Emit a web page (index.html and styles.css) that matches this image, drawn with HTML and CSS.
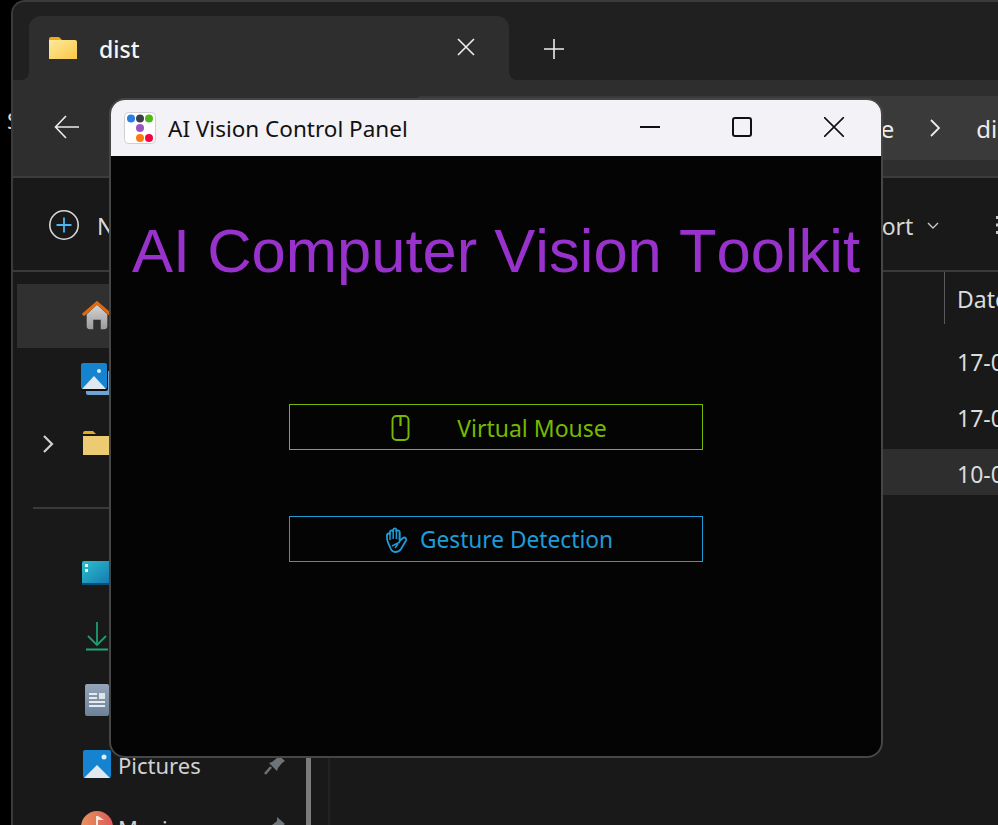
FILE: index.html
```html
<!DOCTYPE html>
<html lang="en">
<head>
<meta charset="utf-8">
<title>AI Vision Control Panel</title>
<link rel="stylesheet" href="styles.css">
</head>
<body>
<div class="desktop">
  <span class="desktop-label">S</span>

  <div class="explorer">
    <div class="tabbar">
      <div class="strip-left"></div>
      <div class="tab-wrap">
        <div class="tab">
          <svg class="tab-folder" viewBox="0 0 28 22"><defs><linearGradient id="tf" x1="0" y1="0" x2="1" y2="1"><stop offset="0" stop-color="#fde9a0"/><stop offset="1" stop-color="#fbc843"/></linearGradient></defs><path d="M0 2a2 2 0 0 1 2-2h8l3 3H0z" fill="#f4a90f"/><path d="M0 3h26a2 2 0 0 1 2 2v17H0z" fill="url(#tf)"/></svg>
          <span class="tab-name">dist</span>
          <svg class="tab-close" viewBox="0 0 18 18"><path d="M1 1l16 16M17 1L1 17" stroke="#f0f0f0" stroke-width="1.6" fill="none"/></svg>
        </div>
      </div>
      <div class="strip-right">
        <svg class="tab-add" viewBox="0 0 20 20"><path d="M10 0v20M0 10h20" stroke="#ececec" stroke-width="1.6" fill="none"/></svg>
      </div>
    </div>

    <div class="navbar">
      <div class="nav-main">
        <svg class="nav-back" viewBox="0 0 26 24"><path d="M25 12H2M12 1L1.500 12 12 23" stroke="#ececec" stroke-width="1.600" fill="none"/></svg>
        <div class="address">
          <span class="crumb">Home</span>
          <svg class="crumb-sep" viewBox="0 0 12 20"><path d="M2 2l8 8-8 8" stroke="#ececec" stroke-width="1.800" fill="none"/></svg>
          <span class="crumb">dist</span>
        </div>
      </div>
    </div>

    <div class="cmdbar">
      <svg class="cmd-new" viewBox="0 0 32 32"><circle cx="16" cy="16" r="14.200" stroke="#d8d8d8" stroke-width="1.600" fill="none"/><path d="M16 8.500v15M8.500 16h15" stroke="#4db5f0" stroke-width="1.800" fill="none"/></svg>
      <span class="cmd-text">New</span>
      <span class="cmd-text cmd-sort">Sort</span>
      <svg class="cmd-caret" viewBox="0 0 12 7"><path d="M1 1l5 5 5-5" stroke="#c8c8c8" stroke-width="1.400" fill="none"/></svg>
      <svg class="cmd-more" viewBox="0 0 3 18"><path d="M0 0h3v3H0zM0 7.500h3v3H0zM0 15h3v3H0z" fill="#c8c8c8"/></svg>
    </div>

    <div class="main">
      <nav class="sidebar">
        <div class="side-row side-row-active">
          <span class="side-icon">
            <svg class="ico-home" viewBox="0 0 32 32"><defs><linearGradient id="hm" x1="0" y1="0" x2="0" y2="1"><stop offset="0" stop-color="#d4d4d4"/><stop offset="1" stop-color="#9c9c9c"/></linearGradient></defs><path d="M5 14L16 4l11 10v13a3 3 0 0 1-3 3h-4V20h-8v10H8a3 3 0 0 1-3-3z" fill="url(#hm)"/><path d="M1 15L16 2l15 13" stroke="#dd6a10" stroke-width="3.400" fill="none"/></svg>
          </span>
        </div>
        <div class="side-row">
          <span class="side-icon">
            <svg class="ico-gallery" viewBox="0 0 32 32"><rect x="5" y="8" width="27" height="24" rx="2" fill="#6ea3d4"/><rect x="0" y="0" width="27" height="28" rx="2" fill="#111"/><rect y="0" width="26" height="26" rx="2" fill="#1583cf"/><circle cx="18" cy="8" r="2" fill="#dcecf8"/><path d="M1 26l12-13 12 13z" fill="#dfe8f0"/></svg>
          </span>
        </div>
        <div class="side-row">
          <svg class="side-chevron" viewBox="0 0 12 20"><path d="M2 2l8 8-8 8" stroke="#d0d0d0" stroke-width="2.200" fill="none"/></svg>
          <span class="side-icon">
            <svg class="ico-folder" viewBox="0 0 28 24"><path d="M0 2a2 2 0 0 1 2-2h8l3 3H0z" fill="#e3a81c"/><path d="M0 5h28v19H0z" fill="#eccb72"/></svg>
          </span>
        </div>
        <div class="side-sep"><span class="side-sep-line"></span></div>
        <div class="side-row">
          <span class="side-icon">
            <svg class="ico-desktop" viewBox="0 0 30 24"><defs><linearGradient id="dk" x1="0" y1="0" x2="1" y2="1"><stop offset="0" stop-color="#2cc0cc"/><stop offset="1" stop-color="#1274b0"/></linearGradient></defs><rect width="30" height="24" rx="2" fill="url(#dk)"/><rect y="22" width="30" height="2" fill="#0f4d73"/><path d="M3 3h3v3H3zM3 8h3v3H3z" fill="#e8f2f6"/></svg>
          </span>
        </div>
        <div class="side-row">
          <span class="side-icon">
            <svg class="ico-download" viewBox="0 0 22 29"><path d="M11 0v23M2 14l9 9 9-9" stroke="#1f9c76" stroke-width="1.800" fill="none"/><path d="M0 27.500h22" stroke="#1fa67c" stroke-width="2" fill="none"/></svg>
          </span>
        </div>
        <div class="side-row">
          <span class="side-icon">
            <svg class="ico-doc" viewBox="0 0 24 32"><defs><linearGradient id="dc" x1="0" y1="0" x2="0" y2="1"><stop offset="0" stop-color="#94a5b8"/><stop offset="1" stop-color="#6d8199"/></linearGradient></defs><rect width="24" height="32" rx="2" fill="url(#dc)"/><path d="M4 9h8v2H4zM4 13h8v2H4zM4 17h16v2H4zM4 21h16v2H4z" fill="#e6eaee"/><rect x="14" y="9" width="6" height="6" fill="#dfe4e9"/></svg>
          </span>
        </div>
        <div class="side-row">
          <span class="side-icon">
            <svg class="ico-pictures" viewBox="0 0 28 28"><rect width="28" height="28" rx="2" fill="#1583cf"/><circle cx="21" cy="7" r="2.500" fill="#dcecf8"/><path d="M1 28l13-13 13 13z" fill="#dfe8f0"/></svg>
          </span>
          <span class="side-label">Pictures</span>
          <svg class="ico-pin" viewBox="0 0 22 22"><path d="M13 1l8 7-3 2-4 5-1 3-8-8 3-1 5-4z" fill="#6f7478"/><path d="M7 14l-6 7" stroke="#6f7478" stroke-width="2.500" fill="none"/></svg>
        </div>
        <div class="side-row">
          <span class="side-icon">
            <svg class="ico-music" viewBox="0 0 32 32"><defs><linearGradient id="m" x1="0" y1="0" x2="1" y2="0"><stop offset="0" stop-color="#e9925c"/><stop offset="1" stop-color="#d95b5b"/></linearGradient></defs><circle cx="16" cy="16" r="16" fill="url(#m)"/><path d="M15 5h2l6 4-6 0v12h-2z" fill="#f6e6e0"/></svg>
          </span>
          <span class="side-label">Music</span>
          <svg class="ico-pin" viewBox="0 0 22 22"><path d="M13 1l8 7-3 2-4 5-1 3-8-8 3-1 5-4z" fill="#6f7478"/><path d="M7 14l-6 7" stroke="#6f7478" stroke-width="2.500" fill="none"/></svg>
        </div>
      </nav>
      <div class="scrollbar"></div>
      <section class="files">
        <header class="files-head"><span class="head-date">Date modified</span></header>
        <div class="file-row">17-03-2024</div>
        <div class="file-row">17-03-2024</div>
        <div class="file-row file-row-active">10-03-2024</div>
      </section>
    </div>
  </div>

  <div class="app">
    <div class="titlebar">
      <svg class="logo" viewBox="0 0 32 32">
        <rect x="0.500" y="0.500" width="31" height="31" rx="4" fill="#fff" stroke="#cfcfcf"/>
        <circle cx="7" cy="6.500" r="4" fill="#2a7de1"/><circle cx="16" cy="6.500" r="4" fill="#3c3f45"/><circle cx="25" cy="6.500" r="4" fill="#4cb81a"/>
        <circle cx="16" cy="16" r="4" fill="#9a55c0"/>
        <circle cx="16" cy="26" r="4" fill="#ff7a10"/><circle cx="25" cy="26" r="4" fill="#f5053f"/>
      </svg>
      <span class="app-name">AI Vision Control Panel</span>
      <div class="controls">
        <span class="control"><svg class="ctl-icon" viewBox="0 0 20 20"><path d="M0 10h20" stroke="#111" stroke-width="2" fill="none"/></svg></span>
        <span class="control"><svg class="ctl-icon" viewBox="0 0 20 20"><rect x="1" y="1" width="18" height="18" rx="2" stroke="#111" stroke-width="2" fill="none"/></svg></span>
        <span class="control"><svg class="ctl-icon" viewBox="0 0 20 20"><path d="M0 0l20 20M20 0L0 20" stroke="#111" stroke-width="1.600" fill="none"/></svg></span>
      </div>
    </div>
    <div class="panel">
      <h1 class="panel-title">AI Computer Vision Toolkit</h1>
      <button class="action action-green">
        <svg class="ico-mouse" viewBox="0 0 18 26"><rect x="1" y="1" width="16" height="24" rx="4" stroke="#76b900" stroke-width="1.900" fill="none"/><path d="M9 2v9" stroke="#76b900" stroke-width="2.200" fill="none"/></svg>
        <span>Virtual Mouse</span>
      </button>
      <button class="action action-blue">
        <svg class="ico-hand" viewBox="0 0 24 26"><path d="M5 20C3.500 17 2 14 2 11V8a1.500 1.500 0 0 1 3 0V5a1.600 1.600 0 0 1 3.200 0V3a1.600 1.600 0 0 1 3.200 0v2a1.600 1.600 0 0 1 3.200 0v9l3.400-3a2 2 0 0 1 3 2.500L16 22c-1.500 2.500-4 3-6 3-2.500 0-4-2-5-5z" stroke="#1f9bd8" stroke-width="1.800" fill="none"/><path d="M5 8v5M8.200 4v8M11.400 3v9M14.600 5v8M7 19l8-4M10 21l3-4" stroke="#1f9bd8" stroke-width="1.500" fill="none"/></svg>
        <span>Gesture Detection</span>
      </button>
    </div>
  </div>
</div>
</body>
</html>
```

FILE: styles.css
```css
* { box-sizing: border-box; }
html, body { margin: 0; height: 100%; background: #000; }
body { overflow: hidden; font-family: "Noto Sans", "Open Sans", sans-serif; }
svg { display: block; flex: none; }

.desktop { position: relative; width: 998px; height: 825px; overflow: hidden; background: #000; }
.desktop-label { position: absolute; left: 7px; top: 105px; font-size: 22px; color: #d8d8d8; }

/* Explorer window behind the app */
.explorer {
  position: absolute; left: 11px; top: 0; width: 1000px; height: 860px;
  display: flex; flex-direction: column;
  border: 2px solid #3b3b3b; border-right: 0; border-bottom: 0;
  border-top-left-radius: 14px; overflow: hidden;
  background: #191919;
}

.tabbar { display: flex; height: 78px; background: #2e2e2e; flex: none; }
.strip-left { width: 16px; background: #202020; border-bottom-right-radius: 8px; }
.tab-wrap { width: 480px; background: #202020; padding-top: 14px; }
.tab {
  height: 64px; background: #2e2e2e; border-radius: 12px 12px 0 0;
  display: flex; align-items: center; padding: 0 34px 0 20px;
}
.tab-folder { width: 28px; height: 22px; }
.tab-name { margin-left: 22px; font-size: 23px; font-weight: 500; color: #f5f5f5; line-height: 1; margin-top: 2px; }
.tab-close { width: 18px; height: 18px; margin-left: auto; margin-bottom: 2px; }
.strip-right { flex: 1; background: #202020; border-bottom-left-radius: 8px; padding: 37px 0 0 35px; }
.tab-add { width: 20px; height: 20px; }

.navbar { height: 98px; flex: none; background: #2e2e2e; border-bottom: 2px solid #3c3c3c; }
.nav-main { display: flex; align-items: flex-start; padding: 16px 0 0 0; }
.nav-back { width: 26px; height: 24px; margin: 19px 0 0 41px; }
.address {
  margin-left: 334px; flex: 1; height: 64px; background: #3a3a3a;
  border-radius: 8px 0 0 0; display: flex; align-items: center;
  padding-left: 412px; overflow: hidden; white-space: nowrap;
  font-size: 24px; color: #ececec;
}
.crumb-sep { width: 12px; height: 20px; margin: 0 35px 0 35px; }

.cmdbar {
  height: 94px; flex: none; border-bottom: 2px solid #3a3a3a;
  background: #191919; display: flex; align-items: center; padding: 2px 0 0 35px;
  font-size: 23px; color: #d8d8d8;
}
.cmd-new { width: 32px; height: 32px; }
.cmd-text { margin-left: 17px; padding-top: 2px; }
.cmd-sort { margin-left: 724px; }
.cmd-caret { width: 12px; height: 7px; margin-left: 14px; }
.cmd-more { width: 3px; height: 18px; margin-left: 57px; }

.main { display: flex; flex: 1; min-height: 0; }
.sidebar { width: 293px; flex: none; padding: 12px 0 0 4px; font-size: 22px; color: #cfd3d6; }
.side-row { height: 63.5px; display: flex; align-items: center; position: relative; padding-left: 64px; padding-right: 20px; }
.side-row-active { background: #303030; }
.side-chevron { position: absolute; left: 25px; top: 23px; width: 12px; height: 20px; }
.side-icon { width: 32px; display: flex; justify-content: center; flex: none; }
.side-label { margin-left: 5px; padding-top: 2px; }
.side-sep { height: 67px; display: flex; align-items: center; padding-left: 16px; }
.side-sep-line { display: block; height: 2px; flex: 1; background: #3a3a3a; }
.ico-home { width: 30px; height: 30px; }
.ico-gallery { width: 32px; height: 32px; }
.ico-folder { width: 28px; height: 24px; }
.ico-desktop { width: 30px; height: 24px; }
.ico-download { width: 22px; height: 29px; }
.ico-doc { width: 24px; height: 32px; }
.ico-pictures { width: 28px; height: 28px; }
.ico-music { width: 32px; height: 32px; }
.ico-pin { width: 22px; height: 22px; margin-left: auto; }

.scrollbar { width: 5px; flex: none; background: #7b7b7b; }
.files { flex: 1; margin-left: 17px; border-left: 2px solid #222; font-size: 23px; color: #dcdcdc; }
.files-head { height: 52px; display: flex; align-items: center; padding-left: 614px; white-space: nowrap; }
.head-date { border-left: 1px solid #5a5a5a; height: 52px; line-height: 54px; padding-left: 12px; }
.file-row { height: 46px; line-height: 46px; margin-top: 10px; padding: 2px 0 0 627px; white-space: nowrap; }
.file-row:first-of-type { margin-top: 13px; }
.file-row-active { background: #2e2e2e; }

/* Foreground app window */
.app {
  position: absolute; left: 109px; top: 98px; width: 774px; height: 660px;
  border: 2px solid #464646; border-radius: 16px; overflow: hidden;
  background: #040404; display: flex; flex-direction: column;
}
.titlebar {
  height: 56px; flex: none; background: #f3f2f6;
  display: flex; align-items: center; padding-left: 13px;
}
.logo { width: 32px; height: 32px; }
.app-name { margin-left: 12px; font-size: 22.5px; color: #111; white-space: nowrap; }
.controls { margin-left: auto; display: flex; padding-right: 1px; }
.control { width: 92px; display: flex; justify-content: center; margin-top: -2px; }
.ctl-icon { width: 20px; height: 20px; }

.panel { flex: 1; display: flex; flex-direction: column; align-items: center; }
.panel-title {
  margin: 60px 0 118px; font: 400 61.500px/70px "Liberation Sans", Arial, sans-serif;
  font-kerning: none; color: #9932cc; white-space: nowrap;
}
.action {
  width: 414px; height: 46px; background: transparent; border: 1px solid;
  display: flex; align-items: center; justify-content: center;
  font: 400 23px/44px "Noto Sans", "Open Sans", sans-serif; padding: 1px 0 0 6px;
}
.action-green { color: #76b900; border-color: #76b900; gap: 47px; }
.action-blue { color: #1f9bd8; border-color: #1f9bd8; gap: 11px; margin-top: 66px; font-size: 22.700px; }
.ico-mouse { width: 19px; height: 26px; }
.ico-hand { width: 24px; height: 26px; }
```
